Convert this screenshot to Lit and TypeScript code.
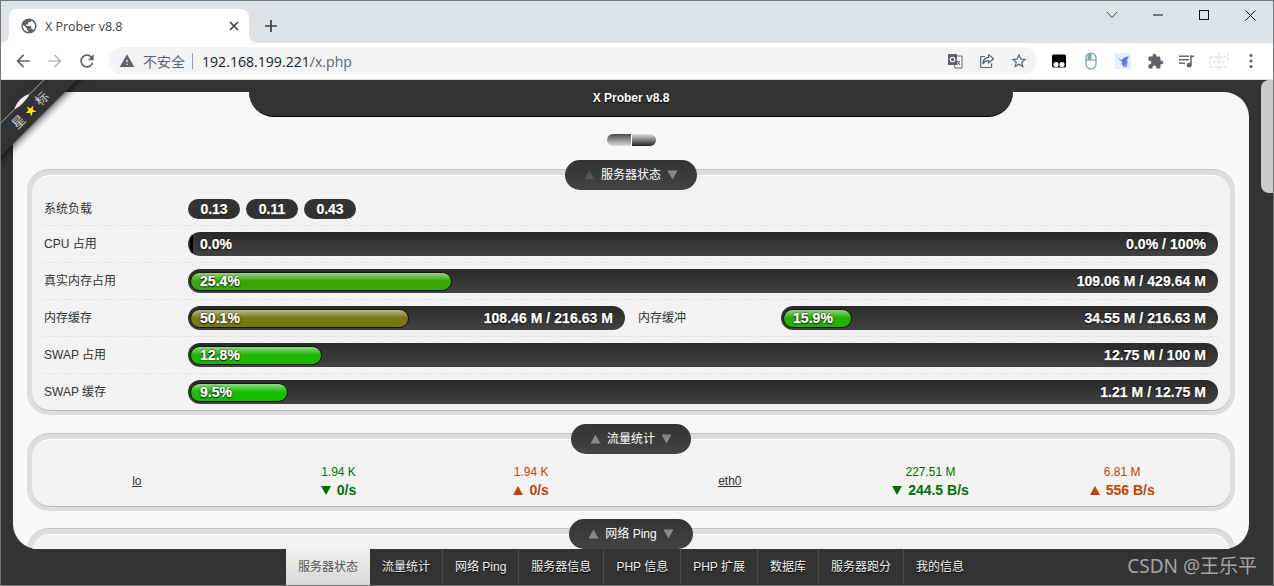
import { LitElement, html, css, svg } from "lit";
import { customElement } from "lit/decorators.js";

const P = {
  globe: "M12 2C6.48 2 2 6.48 2 12s4.48 10 10 10 10-4.48 10-10S17.52 2 12 2zm-1 17.93c-3.95-.49-7-3.85-7-7.93 0-.62.08-1.21.21-1.79L9 15v1c0 1.1.9 2 2 2v1.93zm6.9-2.54c-.26-.81-1-1.39-1.9-1.39h-1v-3c0-.55-.45-1-1-1H8v-2h2c.55 0 1-.45 1-1V7h2c1.1 0 2-.9 2-2v-.41c2.93 1.19 5 4.06 5 7.41 0 2.08-.8 3.97-2.1 5.39z",
  back: "M20 11H7.83l5.59-5.59L12 4l-8 8 8 8 1.41-1.41L7.83 13H20v-2z",
  fwd: "M4 11h12.17l-5.59-5.59L12 4l8 8-8 8-1.41-1.41L16.17 13H4v-2z",
  reload: "M17.65 6.35C16.2 4.9 14.21 4 12 4c-4.42 0-7.99 3.58-7.99 8s3.57 8 7.99 8c3.73 0 6.84-2.55 7.73-6h-2.08c-.82 2.33-3.04 4-5.65 4-3.31 0-6-2.69-6-6s2.69-6 6-6c1.66 0 3.14.69 4.22 1.78L13 11h7V4l-2.35 2.35z",
  warn: "M1 21h22L12 2 1 21zm12-3h-2v-2h2v2zm0-4h-2v-4h2v4z",
  star: "M22 9.24l-7.19-.62L12 2 9.19 8.63 2 9.24l5.46 4.73L5.82 21 12 17.27 18.18 21l-1.63-7.03L22 9.24zM12 15.4l-3.76 2.27 1-4.28-3.32-2.88 4.38-.38L12 6.1l1.71 4.04 4.38.38-3.32 2.88 1 4.28L12 15.4z",
  puzzle: "M20.5 11H19V7c0-1.1-.9-2-2-2h-4V3.5C13 2.12 11.88 1 10.5 1S8 2.12 8 3.5V5H4c-1.1 0-1.99.9-1.99 2v3.8H3.5c1.49 0 2.7 1.21 2.7 2.7s-1.21 2.7-2.7 2.7H2V20c0 1.1.9 2 2 2h3.8v-1.5c0-1.49 1.21-2.7 2.7-2.7 1.49 0 2.7 1.21 2.7 2.7V22H17c1.1 0 2-.9 2-2v-4h1.5c1.38 0 2.5-1.12 2.5-2.5S21.88 11 20.5 11z",
};

const mat = (d: string, size: number, fill: string) => html`<svg width=${size} height=${size} viewBox="0 0 24 24"><path d=${d} fill=${fill}></path></svg>`;

const translateIcon = html`<svg width="16" height="16" viewBox="0 0 16 16">
  <path d="M6 3h9v12H8z" fill="#fff" stroke="#5f6368" stroke-width="1"></path>
  <rect x="1" y="1" width="9" height="11" fill="#5f6368"></rect>
  <circle cx="5.5" cy="6.5" r="2.2" fill="none" stroke="#fff" stroke-width="1.1"></circle>
  <path d="M10 8l3 4M13 8l-3 4" stroke="#5f6368" stroke-width="1.1"></path>
</svg>`;
const shareIcon = html`<svg width="16" height="16" viewBox="0 0 16 16" fill="none" stroke="#5f6368" stroke-width="1.2">
  <path d="M6 3.5H2.6a1 1 0 0 0-1 1v9a1 1 0 0 0 1 1h9a1 1 0 0 0 1-1v-3"></path>
  <path d="M9.6 1.6l5 4.2-5 4.2V7.6c-2.8 0-4.4 1-5.6 3 .2-3.6 2.2-6 5.6-6.2z" stroke-linejoin="round"></path>
</svg>`;
const ghostIcon = html`<svg width="16" height="16" viewBox="0 0 16 16">
  <path d="M2.5 1.5h11a1.5 1.5 0 0 1 1.5 1.5v10a1.5 1.5 0 0 1-1.5 1.5h-11A1.5 1.5 0 0 1 1 13V3a1.5 1.5 0 0 1 1.5-1.5z" fill="#000"></path>
  <circle cx="5" cy="11.5" r="2.6" fill="#fff"></circle><circle cx="11" cy="11.5" r="2.6" fill="#fff"></circle>
</svg>`;
const mouseIcon = html`<svg width="14" height="18" viewBox="0 0 14 18">
  <path d="M7 1.5A3.5 3.5 0 0 0 3.5 5v3h3.5z" fill="#6ec46e"></path>
  <rect x="2" y="1" width="10" height="16" rx="5" fill="none" stroke="#7c93c4" stroke-width="1.2"></rect>
  <path d="M2 8h10M7 1v7" stroke="#7c93c4" stroke-width="1"></path>
</svg>`;
const birdIcon = html`<svg width="16" height="16" viewBox="0 0 16 16">
  <rect width="16" height="16" fill="#e8ecfb"></rect>
  <path d="M1.5 4l5 3 3-2.5 3-1 2 .6-2 1.2-1 4.5-3 3.7-1-2.2-1 0.5.8-2.8z" fill="#3f7fe8"></path>
  <path d="M8 14l3-3.5 1-4.5.6 3.5-1 5z" fill="#a77cf0"></path>
</svg>`;
const musicIcon = html`<svg width="16" height="16" viewBox="0 0 16 16" fill="#5f6368">
  <rect x="0" y="2.5" width="10" height="1.4"></rect><rect x="0" y="6" width="10" height="1.4"></rect><rect x="0" y="9.5" width="6" height="1.4"></rect>
  <rect x="11.2" y="2.5" width="1.5" height="9.5"></rect><rect x="11.2" y="2.5" width="4" height="1.5"></rect><circle cx="10.2" cy="12.2" r="2.4"></circle>
</svg>`;
const faintIcon = html`<svg width="20" height="20" viewBox="0 0 20 20" fill="none" stroke="#d4d4d4" stroke-width="1" stroke-dasharray="3 1.5">
  <path d="M1 6h18M10 1v18M1 6v10M1 16h18M19 2v9M4 11h14"></path>
</svg>`;
const dotsIcon = html`<svg width="16" height="16" viewBox="0 0 16 16" fill="#5f6368"><circle cx="8" cy="2.5" r="1.6"></circle><circle cx="8" cy="8" r="1.6"></circle><circle cx="8" cy="13.5" r="1.6"></circle></svg>`;

const up = (c: string) => html`<svg class="tri" width="13" height="10" viewBox="0 0 13 10"><polygon points="1.5,9.5 11.5,9.5 6.5,0.5" fill=${c}></polygon></svg>`;
const down = (c: string) => html`<svg class="tri" width="13" height="10" viewBox="0 0 13 10"><polygon points="1.5,0.5 11.5,0.5 6.5,9.5" fill=${c}></polygon></svg>`;

const bar = (pct: number, text: string, right: string, color: string) => html`
  <div class="bar">
    <div class="fill ${pct === 0 ? "empty" : ""}" style="width:${pct}%;--c:${color}"></div>
    <div class="bar-text"><span>${text}</span><span>${right}</span></div>
  </div>`;

const traffic = (total: string, rate: string, dir: "down" | "up") => html`
  <div class="cell ${dir}">
    <div class="total">${total}</div>
    <div class="rate">${dir === "down"
      ? svg`<svg width="10" height="9" viewBox="0 0 10 9"><polygon points="0,0 10,0 5,9" fill="currentColor"></polygon></svg>`
      : svg`<svg width="10" height="9" viewBox="0 0 10 9"><polygon points="0,9 10,9 5,0" fill="currentColor"></polygon></svg>`}<span>${rate}</span></div>
  </div>`;

@customElement("app-root")
export class AppRoot extends LitElement {
  static styles = css`
    :host { display: block; width: 1274px; height: 586px; overflow: hidden; box-sizing: border-box; border: 1px solid #70757a; font-family: "Liberation Sans", "Noto Sans CJK SC", sans-serif; font-size: 12px; color: #333; }
    .win { display: flex; flex-direction: column; height: 100%; }
    svg { display: block; }

    .strip { display: flex; align-items: flex-start; height: 42px; background: #dee1e6; padding-left: 8px; flex: none; }
    .tab { position: relative; margin-top: 8px; width: 240px; height: 34px; box-sizing: border-box; background: #fff; border-radius: 8px 8px 0 0; display: flex; align-items: center; padding: 0 8px 0 11px; font-family: "Open Sans", sans-serif; font-size: 12.5px; color: #3c4043; }
    .tab::before, .tab::after { content: ""; position: absolute; bottom: 0; width: 8px; height: 8px; }
    .tab::before { left: -8px; background: radial-gradient(circle at 0 0, transparent 7.5px, #fff 8px); }
    .tab::after { right: -8px; background: radial-gradient(circle at 100% 0, transparent 7.5px, #fff 8px); }
    .tab .name { margin-left: 7px; flex: 1; }
    .tab svg.close { margin-right: 1px; }
    .plus { width: 32px; height: 32px; margin: 9px 0 0 6px; display: flex; align-items: center; justify-content: center; }
    .wc { margin-left: auto; display: flex; }
    .wc div { width: 46px; height: 28px; display: flex; align-items: center; justify-content: center; }

    .tools { height: 36px; flex: none; background: #fff; border-bottom: 1px solid #dadce0; display: flex; align-items: center; padding-left: 6px; box-sizing: content-box; }
    .btn { width: 32px; height: 32px; display: flex; align-items: center; justify-content: center; flex: none; }
    .omni { width: 928px; height: 28px; margin: 0 6px; border-radius: 14px; background: #f1f3f4; display: flex; align-items: center; padding-left: 10px; box-sizing: border-box; flex: none; font-family: "Open Sans", "Noto Sans CJK SC", sans-serif; font-size: 14.1px; color: #5f6368; }
    .omni .nosafe { margin-left: 8px; font-family: "Noto Sans CJK SC", sans-serif; font-size: 14px; }
    .omni .sep { width: 1px; height: 16px; background: #9aa0a6; margin: 0 9px 0 7px; }
    .omni .host { color: #202124; }
    .omni .right { margin-left: auto; display: flex; padding-right: 2px; }

    .page { flex: 1; min-height: 0; display: flex; background: #333; position: relative; overflow: hidden; }
    .col { flex: 1; min-width: 0; display: flex; flex-direction: column; }
    .scroll { width: 12px; flex: none; }
    .thumb { height: 113px; background: #ccc; border-radius: 8px 0 0 8px; }

    .main { flex: 1; min-height: 0; display: flex; flex-direction: column; padding: 0 12px; }
    .head { position: relative; z-index: 2; flex: none; align-self: center; width: 764px; height: 37px; box-sizing: border-box; background: #333; border-bottom: 1px solid #000; border-radius: 0 0 25px 25px; display: flex; align-items: center; justify-content: center; color: #fff; font-weight: bold; font-size: 12px; text-shadow: 0 1px 1px #000; }
    .card { flex: 1; min-height: 0; margin-top: -25px; background: #f8f8f8; border-radius: 25px; overflow: hidden; padding: 42px 14px 0; display: flex; flex-direction: column; }
    .toggle { flex: none; align-self: center; width: 49px; height: 12px; margin-bottom: 23px; border-radius: 6px; overflow: hidden; display: flex; gap: 1px; background: #fff; }
    .toggle i { flex: 1; display: block; }
    .toggle i:first-child { background: linear-gradient(#4a4a4a, #ddd); }
    .toggle i:last-child { background: linear-gradient(#e0e0e0, #222); }

    .sec { flex: none; background: #ddd; border-top: 1px solid #c4c4c4; border-radius: 22px; margin-bottom: 17px; }
    .sec.first { margin-bottom: 18px; }
    .title-wrap { display: flex; justify-content: center; height: 0; position: relative; z-index: 1; }
    .title { height: 30px; margin-top: -10px; flex: none; box-sizing: border-box; padding: 0 18px; border-radius: 15px; background: linear-gradient(#333, #444); color: #fff; display: flex; align-items: center; gap: 5px; font-size: 12px; white-space: nowrap; }
    .title span { padding-bottom: 3px; }
    .inner { margin: 5px; background: #f2f2f2; border-top: 1px solid #fff; border-bottom: 1px solid #b8b8b8; border-radius: 18px; padding: 17px 12px 0; margin-bottom: 4px; }
    .row { display: grid; grid-template-columns: 144px 1fr; align-items: center; padding: 6px 0; border-bottom: 1px dashed #e0e0e0; }
    .row:last-child { border-bottom: none; }
    .row.half { grid-template-columns: 144px 1fr 156px 1fr; }
    .row.half .second { padding-left: 13px; }
    .label { color: #333; font-size: 12px; padding-bottom: 3px; }
    .chips { display: flex; gap: 6px; }
    .chip { width: 52px; height: 20px; border-radius: 10px; background: #333; color: #fff; font-weight: bold; font-size: 14px; -webkit-text-stroke: .25px #fff; display: flex; align-items: center; justify-content: center; text-shadow: 0 1px 1px #000; }
    .bar { position: relative; height: 24px; border-radius: 12px; background: linear-gradient(#2a2a2a, #424242); overflow: hidden; }
    .fill { box-sizing: border-box; height: 19px; margin: 3px 0 2px 2px; border: 1px solid #111; border-radius: 10px; background: linear-gradient(rgba(255,255,255,.5), rgba(255,255,255,.12) 35%, rgba(255,255,255,0) 48%), var(--c); }
    .fill.empty { min-width: 3px; background: #000; border: none; border-radius: 3px 0 0 3px; }
    .bar-text { position: absolute; inset: 0; padding: 0 12px; display: flex; align-items: center; justify-content: space-between; color: #fff; font-weight: bold; font-size: 14px; letter-spacing: .05px; -webkit-text-stroke: .25px #fff; text-shadow: 0 1px 1px #000, 0 0 2px #000; white-space: nowrap; }

    .net { display: grid; grid-template-columns: repeat(6, 1fr); margin: 0 -12px; padding: 6px 0 7px; align-items: center; text-align: center; }
    .net a { color: #333; text-decoration: underline; }
    .net .lo { padding-left: 10px; }
    .net .eth { padding-right: 2px; }
    .net > :nth-child(2) { padding-left: 14px; }
    .net > :nth-child(6) { padding-right: 16px; }
    .cell { line-height: 18px; }
    .cell.down { color: #007000; }
    .cell.up { color: #c04500; }
    .total { font-size: 12px; }
    .rate { display: flex; align-items: center; justify-content: center; gap: 6px; font-weight: bold; font-size: 14px; }
    .sec.last .inner { min-height: 80px; }

    .nav { flex: none; height: 36px; display: flex; justify-content: center; }
    .nav div { box-sizing: border-box; height: 36px; padding: 0 12px 3px; display: flex; align-items: center; border-right: 1px solid #4a4a4a; color: #f2f2f2; font-size: 12px; text-shadow: 0 1px 1px #000; white-space: nowrap; }
    .nav div:last-child { border-right: none; }
    .nav div.active { background: linear-gradient(#f0f0f0, #d8d8d8); color: #555; text-shadow: none; border-right: none; }
    .mark { position: absolute; right: 16px; bottom: 7px; color: #a5a5a5; font-size: 19px; font-family: "Noto Sans", "Noto Sans CJK SC", sans-serif; line-height: 24px; z-index: 3; }

    .ribbon { position: absolute; left: -31px; top: 18px; width: 120px; height: 24px; transform: rotate(-45deg); background: #333; border-top: 1px solid #8a8a8a; box-sizing: border-box; box-shadow: 0 3px 6px rgba(0,0,0,.55); z-index: 3; display: flex; align-items: center; justify-content: center; gap: 4px; color: #ccc; font-size: 13px; line-height: 1; }
    .ribbon .star { color: #ffe600; font-size: 12px; text-shadow: 0 0 2px #000, 0 0 3px #036; }
    .ribbon .sheen { position: absolute; left: 50px; top: -2px; width: 20px; height: 3px; border-radius: 50%; background: #eee; }
  `;

  render() {
    const navs = ["服务器状态", "流量统计", "网络 Ping", "服务器信息", "PHP 信息", "PHP 扩展", "数据库", "服务器跑分", "我的信息"];
    return html`<div class="win">
      <div class="strip">
        <div class="tab">
          ${mat(P.globe, 18, "#5f6368")}
          <span class="name">X Prober v8.8</span>
          <svg class="close" width="12" height="12" viewBox="0 0 12 12"><path d="M2 2l8 8M10 2l-8 8" stroke="#3c4043" stroke-width="1.6"></path></svg>
        </div>
        <div class="plus"><svg width="14" height="14" viewBox="0 0 14 14"><path d="M7 1v12M1 7h12" stroke="#3c4043" stroke-width="1.7"></path></svg></div>
        <div class="wc">
          <div><svg width="12" height="8" viewBox="0 0 12 8"><path d="M1 1l5 5.5L11 1" fill="none" stroke="#444" stroke-width="1"></path></svg></div>
          <div><svg width="10" height="2" viewBox="0 0 10 2"><path d="M0 1h10" stroke="#111" stroke-width="1"></path></svg></div>
          <div><svg width="10" height="10" viewBox="0 0 10 10"><rect x=".5" y=".5" width="9" height="9" fill="none" stroke="#111"></rect></svg></div>
          <div><svg width="11" height="11" viewBox="0 0 11 11"><path d="M.5 .5l10 10M10.5 .5l-10 10" stroke="#111" stroke-width="1"></path></svg></div>
        </div>
      </div>
      <div class="tools">
        <div class="btn">${mat(P.back, 20, "#5f6368")}</div>
        <div class="btn">${mat(P.fwd, 20, "#b9bbbe")}</div>
        <div class="btn">${mat(P.reload, 20, "#5f6368")}</div>
        <div class="omni">
          ${mat(P.warn, 16, "#5f6368")}
          <span class="nosafe">不安全</span><span class="sep"></span>
          <span><span class="host">192.168.199.221</span>/x.php</span>
          <div class="right">
            <div class="btn">${translateIcon}</div>
            <div class="btn">${shareIcon}</div>
            <div class="btn">${mat(P.star, 18, "#5f6368")}</div>
          </div>
        </div>
        <div class="btn">${ghostIcon}</div>
        <div class="btn">${mouseIcon}</div>
        <div class="btn">${birdIcon}</div>
        <div class="btn">${mat(P.puzzle, 17, "#5f6368")}</div>
        <div class="btn">${musicIcon}</div>
        <div class="btn">${faintIcon}</div>
        <div class="btn">${dotsIcon}</div>
      </div>
      <div class="page">
        <div class="ribbon"><span class="sheen"></span><span>星</span><span class="star">★</span><span>标</span></div>
        <div class="col">
          <div class="main">
            <div class="head">X Prober v8.8</div>
            <div class="card">
              <div class="toggle"><i></i><i></i></div>

              <div class="sec first">
                <div class="title-wrap"><div class="title">${up("#555")}<span>服务器状态</span>${down("#888")}</div></div>
                <div class="inner">
                  <div class="row">
                    <div class="label">系统负载</div>
                    <div class="chips"><div class="chip">0.13</div><div class="chip">0.11</div><div class="chip">0.43</div></div>
                  </div>
                  <div class="row"><div class="label">CPU 占用</div>${bar(0, "0.0%", "0.0% / 100%", "#000")}</div>
                  <div class="row"><div class="label">真实内存占用</div>${bar(25.4, "25.4%", "109.06 M / 429.64 M", "rgb(56,165,8)")}</div>
                  <div class="row half">
                    <div class="label">内存缓存</div>${bar(50.1, "50.1%", "108.46 M / 216.63 M", "rgb(117,122,20)")}
                    <div class="label second">内存缓冲</div>${bar(15.9, "15.9%", "34.55 M / 216.63 M", "rgb(36,176,0)")}
                  </div>
                  <div class="row"><div class="label">SWAP 占用</div>${bar(12.8, "12.8%", "12.75 M / 100 M", "rgb(28,184,0)")}</div>
                  <div class="row"><div class="label">SWAP 缓存</div>${bar(9.5, "9.5%", "1.21 M / 12.75 M", "rgb(22,190,0)")}</div>
                </div>
              </div>

              <div class="sec">
                <div class="title-wrap"><div class="title">${up("#888")}<span>流量统计</span>${down("#888")}</div></div>
                <div class="inner">
                  <div class="net">
                    <div class="lo"><a>lo</a></div>
                    ${traffic("1.94 K", "0/s", "down")}
                    ${traffic("1.94 K", "0/s", "up")}
                    <div class="eth"><a>eth0</a></div>
                    ${traffic("227.51 M", "244.5 B/s", "down")}
                    ${traffic("6.81 M", "556 B/s", "up")}
                  </div>
                </div>
              </div>

              <div class="sec last">
                <div class="title-wrap"><div class="title">${up("#888")}<span>网络 Ping</span>${down("#888")}</div></div>
                <div class="inner"></div>
              </div>
            </div>
          </div>
          <div class="nav">${navs.map((n, i) => html`<div class=${i === 0 ? "active" : ""}>${n}</div>`)}</div>
        </div>
        <div class="scroll"><div class="thumb"></div></div>
        <div class="mark">CSDN @王乐平</div>
      </div>
    </div>`;
  }
}
